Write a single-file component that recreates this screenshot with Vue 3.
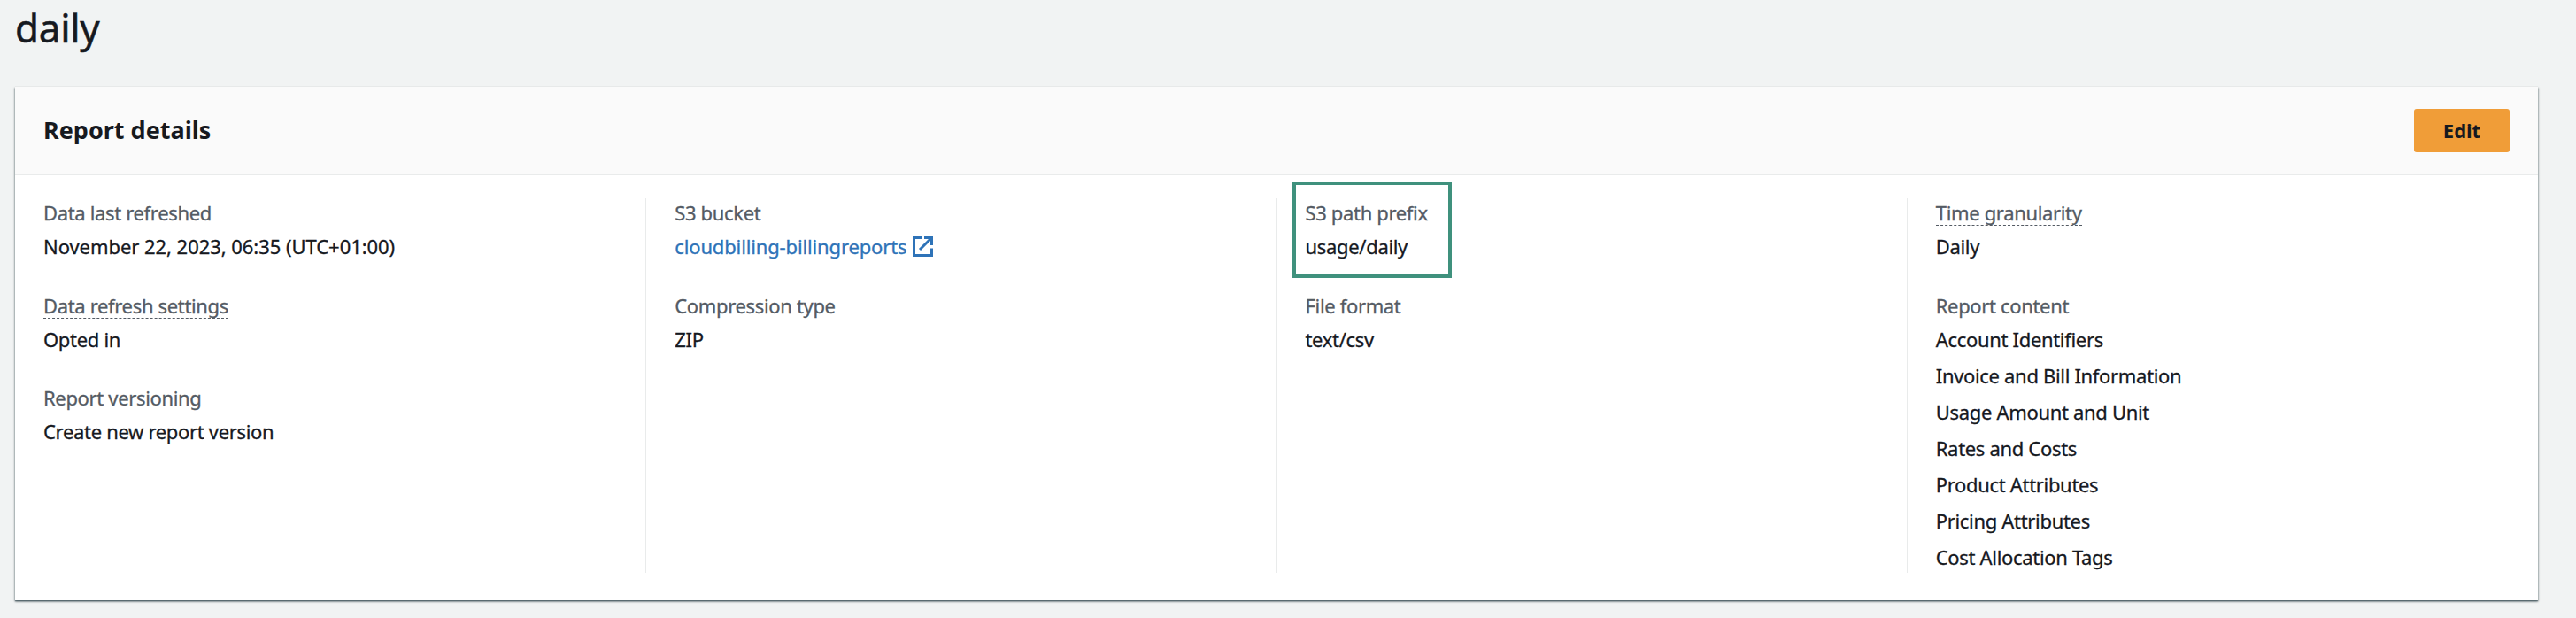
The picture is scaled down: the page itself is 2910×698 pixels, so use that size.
<script setup>
const columns = [
  [
    { label: 'Data last refreshed', date: true, values: ['November 22, 2023, 06:35 (UTC+01:00)'] },
    { label: 'Data refresh settings', hint: true, values: ['Opted in'] },
    { label: 'Report versioning', values: ['Create new report version'] },
  ],
  [
    { label: 'S3 bucket', link: true, values: ['cloudbilling-billingreports'] },
    { label: 'Compression type', values: ['ZIP'] },
  ],
  [
    { label: 'S3 path prefix', highlight: true, values: ['usage/daily'] },
    { label: 'File format', values: ['text/csv'] },
  ],
  [
    { label: 'Time granularity', hint: true, values: ['Daily'] },
    {
      label: 'Report content',
      values: [
        'Account Identifiers',
        'Invoice and Bill Information',
        'Usage Amount and Unit',
        'Rates and Costs',
        'Product Attributes',
        'Pricing Attributes',
        'Cost Allocation Tags',
      ],
    },
  ],
];
</script>

<template>
  <main class="page">
    <h1>daily</h1>
    <section class="card">
      <header class="card-header">
        <h2>Report details</h2>
        <button type="button" class="edit">Edit</button>
      </header>
      <div class="columns">
        <div v-for="(items, i) in columns" :key="i" class="column">
          <div v-for="item in items" :key="item.label" class="item" :class="{ highlight: item.highlight }">
            <div class="label"><span :class="{ hint: item.hint }">{{ item.label }}</span></div>
            <div v-for="value in item.values" :key="value" class="value" :class="{ date: item.date }">
              <a v-if="item.link" class="link">
                <span>{{ value }}</span>
                <svg class="external" viewBox="0 0 23 23" fill="none" stroke="currentColor" stroke-width="3">
                  <path d="M10 1.5H1.5v20h20V13.5" />
                  <path d="M13 1.5h8.5V10M21 2L8 15" />
                </svg>
              </a>
              <span v-else>{{ value }}</span>
            </div>
          </div>
        </div>
      </div>
    </section>
  </main>
</template>

<style>
body {
  background: #f1f3f3;
}
</style>

<style scoped>
.page {
  box-sizing: border-box;
  height: 698px;
  padding: 0 43px 0 17px;
  overflow: hidden;
  background: #f1f3f3;
  color: #16191f;
  font-family: "Noto Sans", "Open Sans", sans-serif;
  font-size: 22px;
}

h1 {
  margin: 0;
  height: 98px;
  font-size: 44px;
  font-weight: 400;
  letter-spacing: -0.3px;
  line-height: 63px;
  -webkit-text-stroke: 0.5px;
}

.card {
  height: 580px;
  background: #fff;
  box-shadow: 0 -1px 0 #e7e9e9, 0 1px 1px rgba(0, 28, 36, 0.3), 0 2px 2px rgba(0, 28, 36, 0.3),
    1px 1px 2px rgba(0, 28, 36, 0.2), -1px 1px 2px rgba(0, 28, 36, 0.2);
}

.card-header {
  display: flex;
  align-items: center;
  justify-content: space-between;
  box-sizing: border-box;
  height: 100px;
  padding: 0 32px;
  border-bottom: 1px solid #e9ebeb;
  background: #fafafa;
}

h2 {
  margin: 0 0 3px;
  font-size: 27px;
  font-weight: 700;
}

.edit {
  width: 108px;
  height: 49px;
  padding: 0 0 1px;
  border: 0;
  border-radius: 3px;
  background: #f09d38;
  color: #16191f;
  font-family: inherit;
  font-size: 22px;
  font-weight: 700;
}

.columns {
  display: grid;
  grid-template-columns: repeat(4, 1fr);
  grid-template-rows: 423px;
  column-gap: 64px;
  padding: 26px 33px 0 32px;
  -webkit-text-stroke: 0.3px;
}

.column + .column {
  margin-left: -32px;
  padding-left: 32px;
  border-left: 1px solid #e9ebeb;
}

.item {
  position: relative;
  margin-bottom: 29.5px;
}

.label {
  height: 34px;
  color: #545b64;
  letter-spacing: -0.34px;
  line-height: 32px;
}

.hint {
  display: inline-block;
  height: 30px;
  border-bottom: 1px dashed #545b64;
}

.value {
  height: 41px;
  letter-spacing: -0.32px;
  line-height: 41px;
}

.value.date {
  letter-spacing: -0.05px;
}

.link {
  display: flex;
  align-items: center;
  gap: 7px;
  color: #2e73b8;
  letter-spacing: -0.14px;
}

.external {
  width: 23px;
  height: 23px;
  margin-bottom: 1px;
}

/* callout frame around the path prefix */
.highlight::after {
  content: "";
  position: absolute;
  top: -19px;
  left: -15px;
  box-sizing: border-box;
  width: 180px;
  height: 109px;
  border: 4px solid #3f917d;
}
</style>
